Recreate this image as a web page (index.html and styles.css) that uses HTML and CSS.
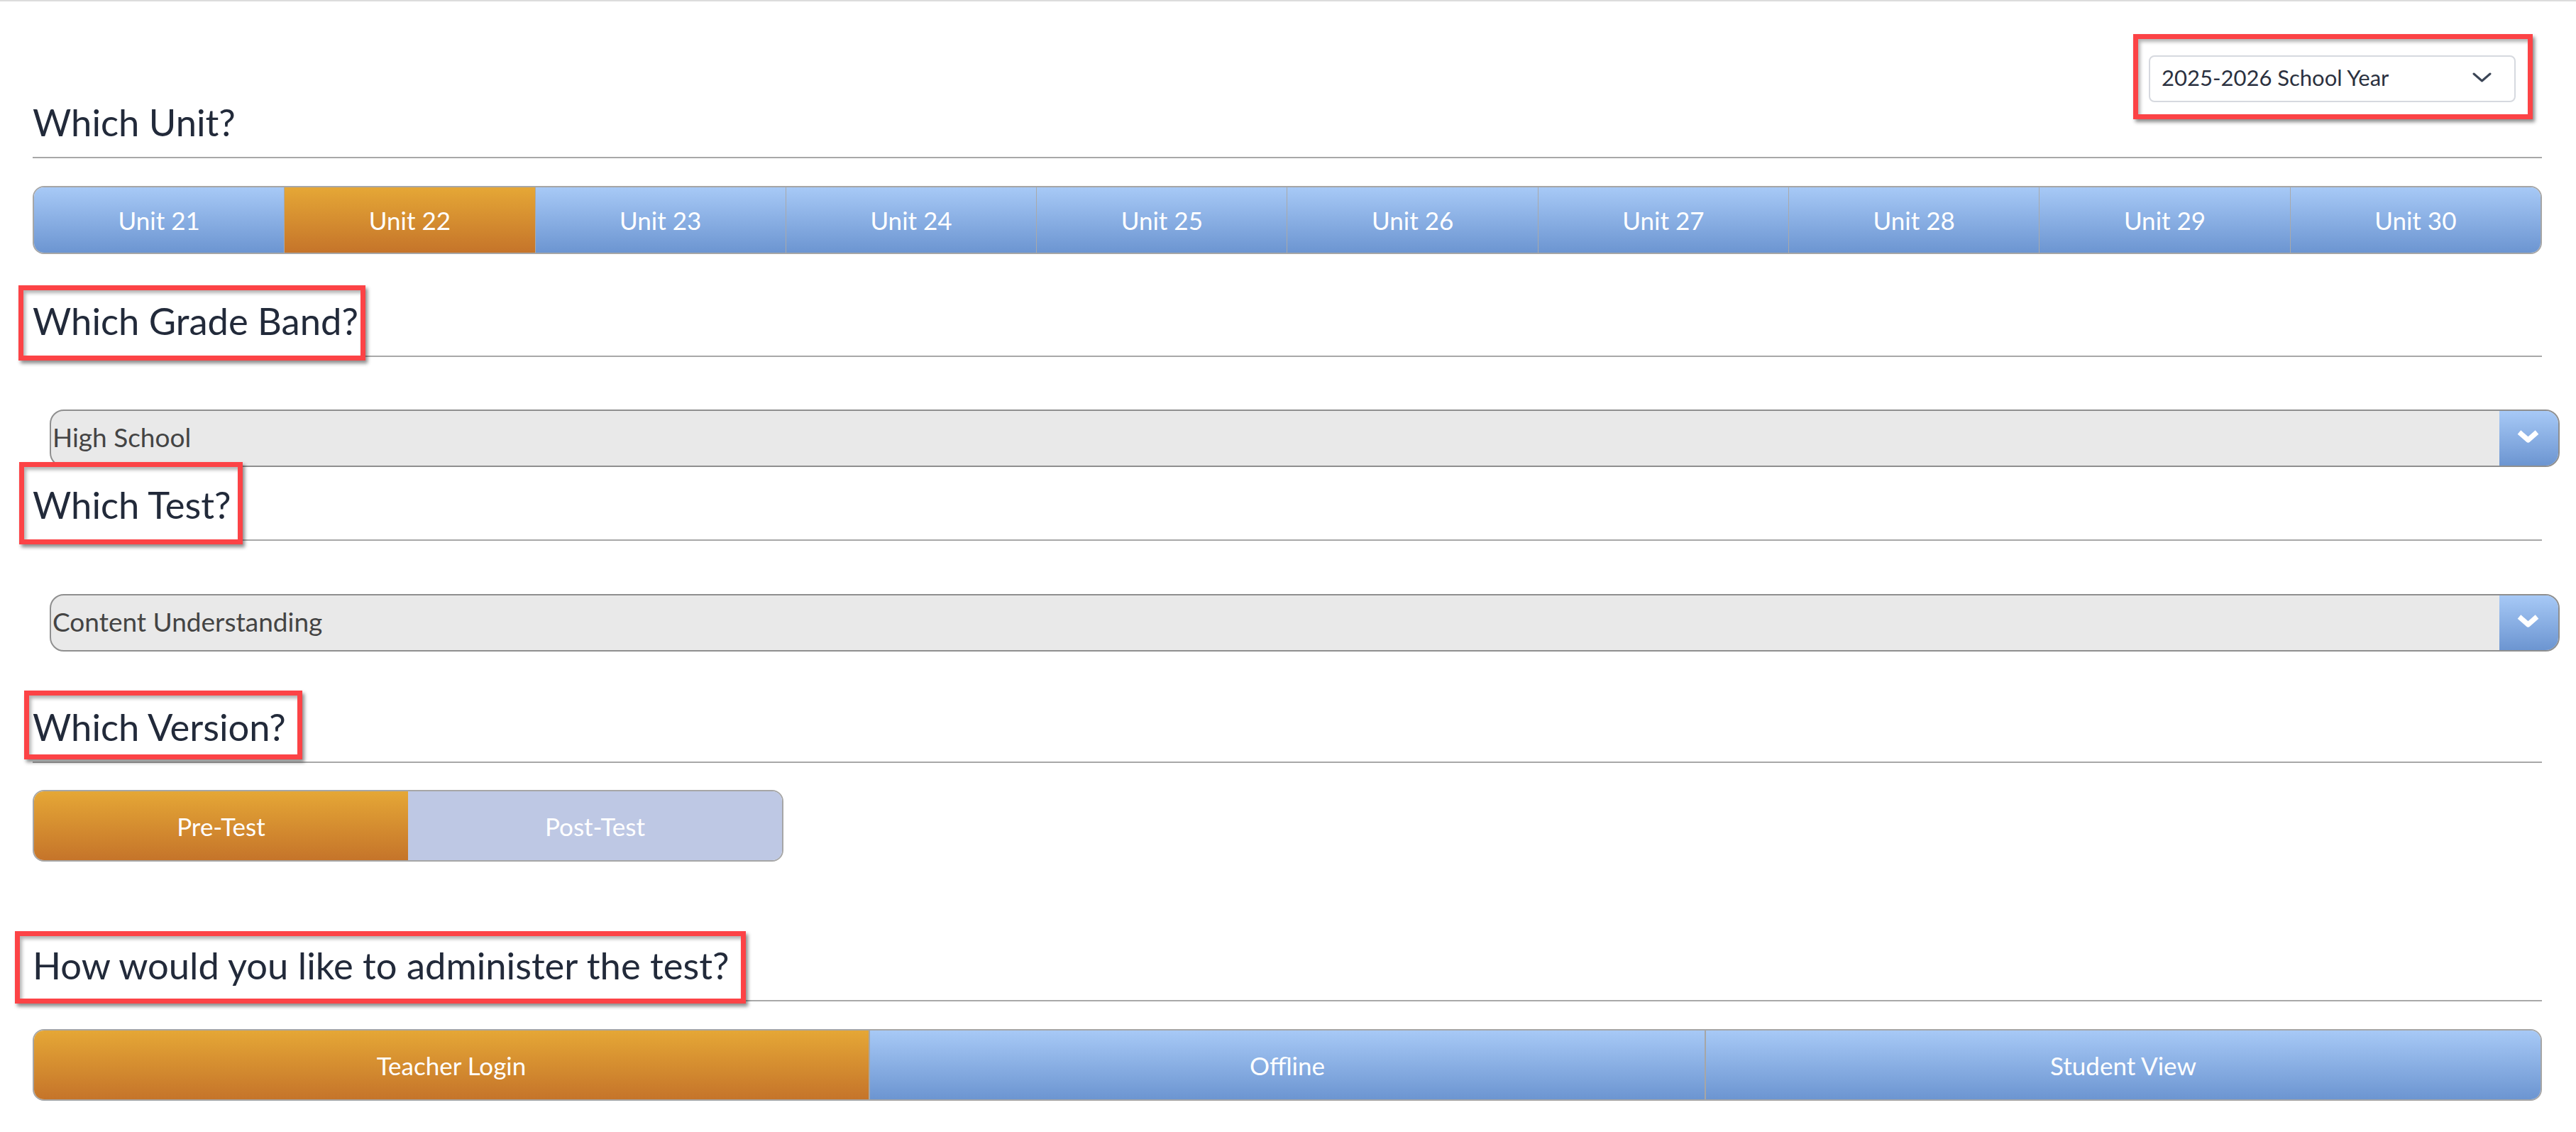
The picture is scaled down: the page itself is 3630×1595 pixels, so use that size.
FILE: index.html
```html
<!DOCTYPE html>
<html lang="en">
<head>
<meta charset="utf-8">
<title>Test Administration</title>
<link rel="stylesheet" href="styles.css">
</head>
<body>
<div class="page">
  <div class="topbar">
    <div class="year-select">
      <span class="year-label">2025-2026 School Year</span>
      <svg class="year-chev" width="27" height="14" viewBox="0 0 27 14"><polyline points="2,2 13.5,12 25,2" fill="none" stroke="#3b4556" stroke-width="3" stroke-linecap="round" stroke-linejoin="round"/></svg>
      <span class="annot annot-year"></span>
    </div>
  </div>

  <h2 class="section-title">Which Unit?</h2>
  <div class="seg-bar unit-bar">
    <div class="seg blue">Unit 21</div>
    <div class="seg orange">Unit 22</div>
    <div class="seg blue">Unit 23</div>
    <div class="seg blue">Unit 24</div>
    <div class="seg blue">Unit 25</div>
    <div class="seg blue">Unit 26</div>
    <div class="seg blue">Unit 27</div>
    <div class="seg blue">Unit 28</div>
    <div class="seg blue">Unit 29</div>
    <div class="seg blue">Unit 30</div>
  </div>

  <h2 class="section-title gap-grade">Which Grade Band?<span class="annot annot-grade"></span></h2>
  <div class="dropdown dd-first">
    <span class="dd-text">High School</span>
    <span class="dd-btn"><svg width="33" height="22" viewBox="0 0 33 22"><polyline points="4,5 16.5,16 29,5" fill="none" stroke="#ffffff" stroke-width="7" stroke-linejoin="round"/></svg></span>
  </div>

  <h2 class="section-title gap-test">Which Test?<span class="annot annot-test"></span></h2>
  <div class="dropdown dd-second">
    <span class="dd-text">Content Understanding</span>
    <span class="dd-btn"><svg width="33" height="22" viewBox="0 0 33 22"><polyline points="4,5 16.5,16 29,5" fill="none" stroke="#ffffff" stroke-width="7" stroke-linejoin="round"/></svg></span>
  </div>

  <h2 class="section-title gap-version">Which Version?<span class="annot annot-version"></span></h2>
  <div class="seg-bar version-bar">
    <div class="seg orange">Pre-Test</div>
    <div class="seg muted">Post-Test</div>
  </div>

  <h2 class="section-title gap-admin">How would you like to administer the test?<span class="annot annot-admin"></span></h2>
  <div class="seg-bar admin-bar">
    <div class="seg orange">Teacher Login</div>
    <div class="seg blue">Offline</div>
    <div class="seg blue">Student View</div>
  </div>
</div>
</body>
</html>
```

FILE: styles.css
```css
html, body {
  margin: 0;
  padding: 0;
  background: #ffffff;
}
body {
  font-family: Lato, "Open Sans", sans-serif;
  border-top: 2px solid #dcdcdc;
}
.page {
  padding: 0 48px 0 46px;
}

/* top bar with year selector */
.topbar {
  display: flex;
  justify-content: flex-end;
  align-items: flex-start;
  box-sizing: border-box;
  height: 137px;
  padding-top: 76px;
  padding-right: 37px;
}
.year-select {
  position: relative;
  box-sizing: border-box;
  width: 517px;
  height: 66px;
  border: 2px solid #d6d9df;
  border-radius: 8px;
  background: #ffffff;
  display: flex;
  align-items: center;
  justify-content: space-between;
  padding: 0 32px 0 16px;
}
.year-label {
  font-size: 31px;
  color: #2b3140;
  line-height: 1;
  padding-bottom: 4px;
}
.year-chev {
  display: block;
  margin-top: -4px;
}

/* section headings */
.section-title {
  position: relative;
  margin: 0;
  font-size: 52.5px;
  font-weight: 400;
  line-height: 65px;
  color: #222a3a;
  padding-bottom: 17px;
  border-bottom: 2px solid #a8a8a8;
}
.gap-grade { margin-top: 61px; }
.gap-test { margin-top: 20px; }
.gap-version { margin-top: 73px; }
.gap-admin { margin-top: 113px; }

/* segmented bars */
.seg-bar {
  display: flex;
  box-sizing: border-box;
  border: 2px solid #a6a6a6;
  border-radius: 16px;
  overflow: hidden;
}
.seg {
  flex: 1 1 0;
  display: flex;
  align-items: center;
  justify-content: center;
  color: #ffffff;
  font-size: 35px;
}
.seg + .seg {
  border-left: 1px solid #a9a9a9;
}
.blue {
  background: linear-gradient(to bottom, #a7c9f6 0%, #6c95d1 100%);
}
.orange {
  background: linear-gradient(to bottom, #e5a736 0%, #c5742a 100%);
}
.muted {
  background: #bec8e4;
}
.unit-bar {
  margin-top: 39px;
  height: 96px;
}
.version-bar {
  margin-top: 38px;
  width: 1058px;
  height: 101px;
}
.version-bar .seg + .seg {
  border-left: 0;
}
.admin-bar {
  margin-top: 39px;
  height: 101px;
}
.admin-bar .seg + .seg {
  border-left: 2px solid #a6a6a6;
}

/* dropdowns */
.dropdown {
  display: flex;
  box-sizing: border-box;
  height: 81px;
  margin-left: 24px;
  margin-right: -25px;
  border: 2px solid #8f8f8f;
  border-radius: 20px;
  background: #e9e9e9;
  overflow: hidden;
}
.dd-first { margin-top: 74px; }
.dd-second { margin-top: 75px; }
.dd-text {
  flex: 1 1 auto;
  display: flex;
  align-items: center;
  padding-left: 2px;
  padding-bottom: 4px;
  font-size: 37px;
  color: #444444;
}
.dd-btn {
  flex: 0 0 83px;
  display: flex;
  align-items: center;
  justify-content: center;
  background: linear-gradient(to bottom, #a7c9f6 0%, #6c95d1 100%);
}
.dd-btn svg {
  display: block;
  margin-left: -3px;
  margin-top: -6px;
}

/* red annotation frames (overlay) */
.annot {
  position: absolute;
  box-sizing: border-box;
  border: 7px solid #fc4346;
  box-shadow: 3px 4px 5px rgba(0, 0, 0, 0.45), inset 3px 4px 5px rgba(0, 0, 0, 0.3);
  pointer-events: none;
}
.annot-year {
  left: -24px;
  top: -32px;
  width: 563px;
  height: 120px;
}
.annot-grade {
  left: -20px;
  top: -17px;
  width: 489px;
  height: 106px;
}
.annot-test {
  left: -19px;
  top: -27px;
  width: 315px;
  height: 116px;
}
.annot-version {
  left: -12px;
  top: -18px;
  width: 392px;
  height: 97px;
}
.annot-admin {
  left: -25px;
  top: -15px;
  width: 1030px;
  height: 102px;
}
```
